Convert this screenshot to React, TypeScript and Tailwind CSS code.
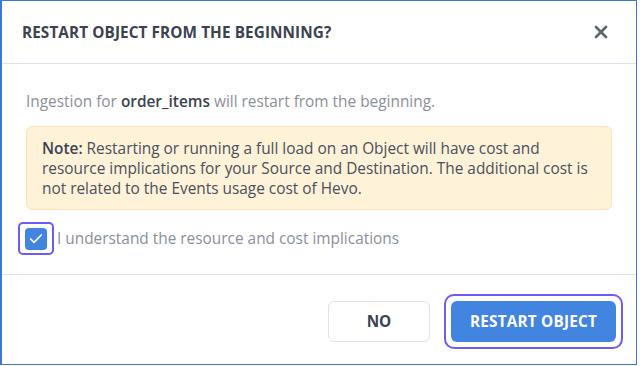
import { X, Check } from 'lucide-react'

export default function App() {
    return (
        <div className="w-[640px] h-[366px] bg-white" style={{ fontFamily: '"Open Sans", "Noto Sans", sans-serif' }}>
            <div className="w-[637px] h-[365px] border border-l-2 border-[#3b78d8] flex flex-col">
                <div className="h-[63px] shrink-0 flex items-center justify-between pl-[20px] pr-[25px] border-b border-[#dde3ee]">
                    <h2 className="text-[15.3px] font-bold text-[#3b4250] tracking-[0.1px]">RESTART OBJECT FROM THE BEGINNING?</h2>
                    <X className="w-[20px] h-[20px] text-[#5f6573]" strokeWidth={3.2} />
                </div>

                <div className="flex-1 px-[24px] pt-[27px]">
                    <p className="text-[15.4px] leading-[21px] text-[#8a8f9b]">
                        Ingestion for <span className="font-semibold text-[#3b4250]">order_items</span> will restart from the beginning.
                    </p>

                    <div className="mt-[14px] rounded-[6px] border border-[#fbe4b4] bg-[#fef2d8] px-[15px] pt-[12px] pb-[10px] text-[15.4px] leading-[20px] text-[#4a505c]">
                        <span className="font-semibold text-[#3b4250]">Note:</span> Restarting or running a full load on an Object will have cost and resource implications for your Source and Destination. The additional cost is not related to the Events usage cost of Hevo.
                    </div>

                    <label className="mt-[12px] -ml-[8px] flex items-center gap-[3px]">
                        <span className="w-[36px] h-[33px] rounded-[5px] border-2 border-[#6b5cf6] flex items-center justify-center">
                            <span className="w-[22px] h-[22px] rounded-[4px] bg-[#4185e0] flex items-center justify-center">
                                <Check className="w-[16px] h-[16px] text-white" strokeWidth={2.5} />
                            </span>
                        </span>
                        <span className="text-[15.4px] text-[#8a8f9b]">I understand the resource and cost implications</span>
                    </label>
                </div>

                <div className="h-[90px] shrink-0 border-t border-[#dde3ee] flex items-center justify-end gap-[14px] pr-[13px] pt-[3px]">
                    <button className="w-[102px] h-[41px] rounded-[6px] border border-[#dfe2e8] bg-white text-[15.3px] font-bold text-[#3b4250]">
                        NO
                    </button>
                    <span className="p-[5px] rounded-[10px] border-2 border-[#6b5cf6]">
                        <button className="block w-[165px] h-[41px] rounded-[6px] bg-[#4185e0] text-[15.3px] font-bold text-white tracking-[0.2px]">
                            RESTART OBJECT
                        </button>
                    </span>
                </div>
            </div>
        </div>
    )
}
